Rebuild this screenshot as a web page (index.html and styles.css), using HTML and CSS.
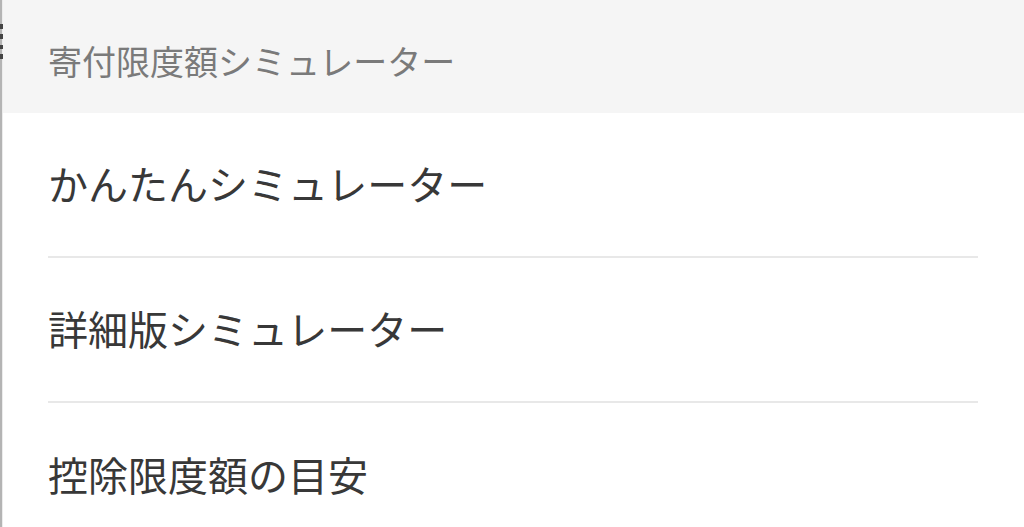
FILE: index.html
```html
<!DOCTYPE html>
<html lang="ja">
<head>
<meta charset="utf-8">
<title>寄付限度額シミュレーター</title>
<link rel="stylesheet" href="styles.css">
</head>
<body>
<div class="page">
  <div class="edge">
    <span class="mark m1"></span>
    <span class="mark m2"></span>
    <span class="mark m3"></span>
    <span class="mark m4"></span>
  </div>
  <div class="panel">
    <div class="section-header">寄付限度額シミュレーター</div>
    <ul class="menu">
      <li class="menu-item">かんたんシミュレーター</li>
      <li class="menu-item">詳細版シミュレーター</li>
      <li class="menu-item">控除限度額の目安</li>
    </ul>
  </div>
</div>
</body>
</html>
```

FILE: styles.css
```css
html, body {
  margin: 0;
  padding: 0;
  background: #ffffff;
}
body {
  font-family: "Noto Sans CJK JP", "Noto Sans", sans-serif;
  overflow: hidden;
}
.page {
  display: flex;
  width: 1024px;
  height: 527px;
  overflow: hidden;
}
.edge {
  position: relative;
  width: 2px;
  flex: 0 0 2px;
  background: #b4b4b4;
  border-right: 1px solid #ececec;
}
.mark {
  position: absolute;
  left: 0;
  width: 3px;
  background: #444;
}
.m1 { top: 24px; height: 5px; }
.m2 { top: 34px; height: 5px; }
.m3 { top: 45px; height: 4px; }
.m4 { top: 54px; height: 5px; }
.panel {
  flex: 1;
  display: flex;
  flex-direction: column;
}
.section-header {
  flex-shrink: 0;
  box-sizing: border-box;
  height: 113px;
  padding: 8px 0 0 45px;
  display: flex;
  align-items: center;
  background: #f5f5f5;
  color: #7a7a7a;
  font-size: 34px;
  line-height: 1;
}
.menu {
  flex-shrink: 0;
  list-style: none;
  margin: 0;
  padding: 0 46px 0 45px;
}
.menu-item {
  box-sizing: border-box;
  height: 145px;
  display: flex;
  align-items: center;
  padding-bottom: 3px;
  border-bottom: 2px solid #e8e8e8;
  color: #383838;
  font-size: 40px;
  line-height: 1;
}
.menu-item:last-child {
  border-bottom: none;
}
```
